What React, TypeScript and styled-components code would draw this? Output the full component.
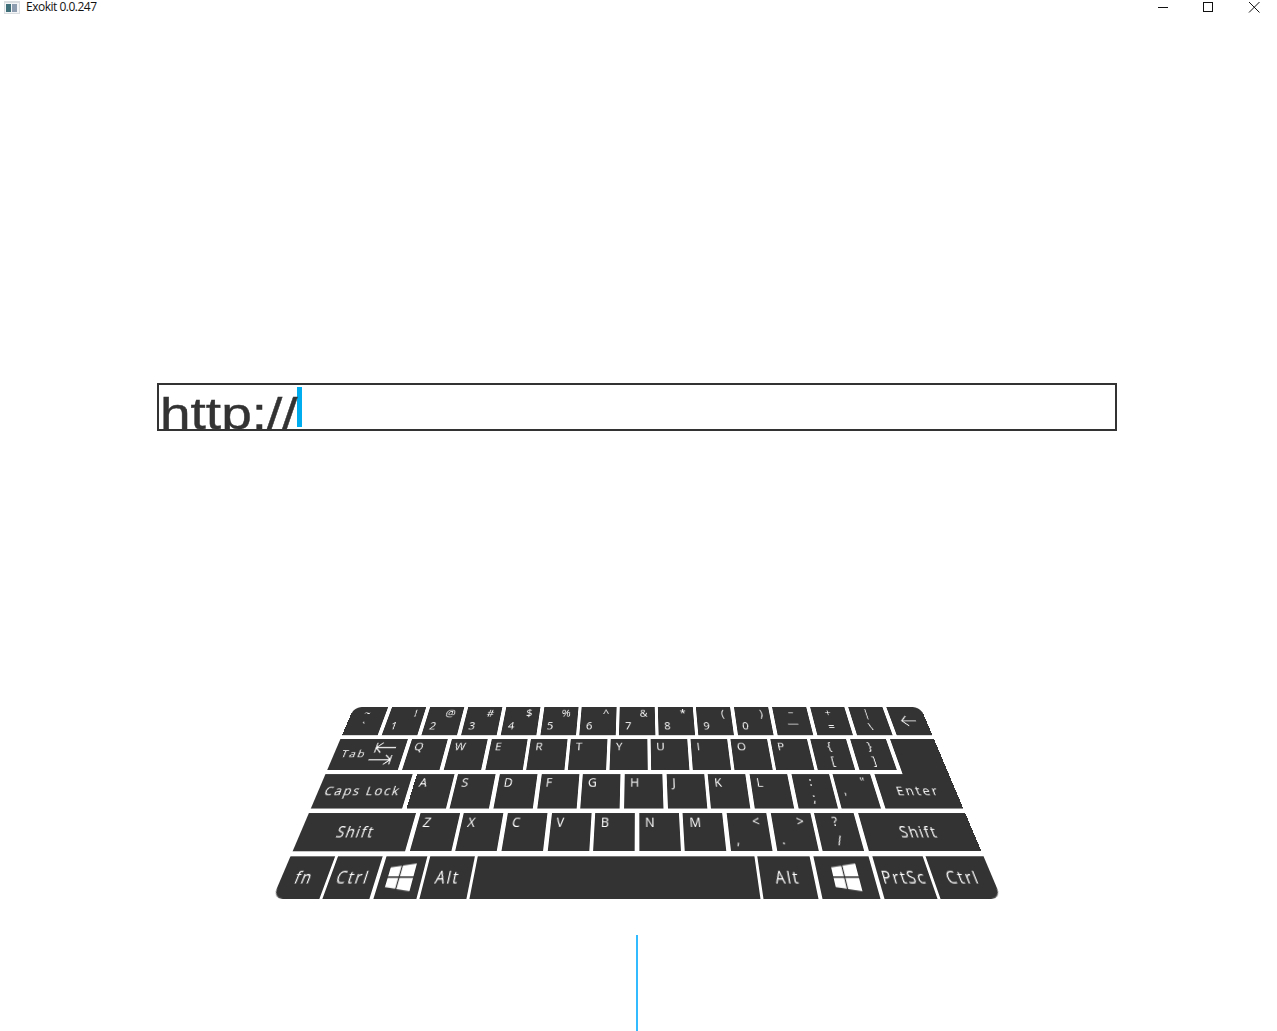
import React from "react";
import styled, { createGlobalStyle } from "styled-components";

const GlobalStyle = createGlobalStyle`
  html, body { margin: 0; padding: 0; background: #fff; overflow: hidden; }
`;

const Page = styled.div`
  width: 1277px;
  height: 1031px;
  display: flex;
  flex-direction: column;
  overflow: hidden;
`;

const TitleBar = styled.header`
  height: 15px;
  display: flex;
  align-items: flex-start;
  overflow: hidden;
  flex: none;
`;

const AppIcon = styled.svg`
  width: 16px;
  height: 13px;
  margin: 1px 6px 0 4px;
  flex: none;
`;

const Title = styled.span`
  font: 12px/14px "Open Sans", sans-serif;
  letter-spacing: -0.5px;
  color: #111;
  flex: 1;
`;

const WinButton = styled.svg`
  width: 46px;
  height: 15px;
  flex: none;
`;

const WinButtons = styled.div`
  display: flex;
  margin-right: -1px;
`;

const UrlBox = styled.div`
  box-sizing: border-box;
  width: 960px;
  height: 48px;
  margin: 368px 0 0 157px;
  border: 2px solid #333;
  display: flex;
  align-items: flex-start;
  overflow: hidden;
  flex: none;
`;

/* The reference's text is stretched sideways: 44px high, 55px wide */
const UrlText = styled.span`
  font: 44px/57px "Liberation Sans", Arial, sans-serif;
  color: #333;
  -webkit-text-stroke: 0.4px #333;
  margin-left: 1px;
  white-space: nowrap;
  transform-origin: 0 0;
  transform: scaleX(1.25);
`;

const Caret = styled.span`
  width: 5px;
  height: 40px;
  margin: 2px 0 0 27px;
  background: #00aeef;
  flex: none;
`;

/* The keyboard is laid out flat, then projected onto the reference's trapezoid */
const Keyboard = styled.div`
  width: 729px;
  height: 220px;
  margin: 276px 0 0 354px;
  display: grid;
  grid-template-rows: repeat(5, 1fr);
  row-gap: 5.5px;
  flex: none;
  transform-origin: 0 0;
  transform: matrix3d(0.777, 0, 0, 0, -0.2884, 0.678, 0, -0.001015, 0, 0, 1, 0, 0, 0, 0, 1);
  font-family: "Open Sans", sans-serif;
  color: #fff;
`;

const Row = styled.div<{ $gap?: number }>`
  display: flex;
  gap: ${(p) => p.$gap ?? 4.6}px;
  min-height: 0;
`;

type Layout = "letter" | "pair" | "stack" | "close" | "center";

const layouts: Record<Layout, string> = {
  letter: "align-items: flex-start; justify-content: flex-start; padding: 2px 0 0 6.5px;",
  pair: "flex-direction: column; justify-content: space-between; align-items: stretch; padding: 1px 9px 5px 7px;",
  stack: "flex-direction: column; justify-content: space-between; align-items: center; padding: 1px 3px 4px 0;",
  close: "flex-direction: column; justify-content: center; align-items: center; padding-bottom: 8px;",
  center: "align-items: center; justify-content: center;",
};

const Key = styled.div<{ $w?: number; $layout?: Layout; $radius?: string; $join?: boolean }>`
  box-sizing: border-box;
  position: relative;
  display: flex;
  background: #333;
  min-width: 0;
  font-size: 14px;
  line-height: 1.1;
  ${(p) => (p.$w ? `flex: 0 0 ${p.$w}px;` : "flex: 1 1 40px;")}
  ${(p) => layouts[p.$layout ?? "letter"]}
  ${(p) => (p.$radius ? `border-radius: ${p.$radius};` : "")}
  ${(p) =>
    p.$join
      ? `&::after { content: ""; position: absolute; left: 0; right: 0; top: 100%; height: 6px; background: #333; }`
      : ""}
`;

const Upper = styled.span`
  text-align: right;
`;

const Lower = styled.span`
  text-align: left;
`;

const Wide = styled.span<{ $size?: number; $track?: number }>`
  font-size: ${(p) => p.$size ?? 15.5}px;
  letter-spacing: ${(p) => p.$track ?? 1.6}px;
  white-space: nowrap;
`;

const TabArrows = styled.svg`
  width: 32px;
  height: 32px;
  margin-left: 3px;
  flex: none;
`;

const BackArrow = styled.svg`
  width: 20px;
  height: 16px;
`;

const WinLogo = styled.svg`
  width: 28px;
  height: 26px;
`;

const Pointer = styled.div`
  width: 2px;
  height: 96px;
  margin: 8px 0 0 636px;
  background: #33bbff;
  flex: none;
`;

const Windows = () => (
  <WinLogo viewBox="0 0 24 24" fill="#fff">
    <path d="M0 3.4 10 2v9.4H0zM11.2 1.8 24 0v11.4H11.2zM0 12.6h10V22L0 20.6zM11.2 12.6H24V24l-12.8-1.8z" />
  </WinLogo>
);

const pairs: [string, string][] = [
  ["!", "1"], ["@", "2"], ["#", "3"], ["$", "4"], ["%", "5"], ["^", "6"],
  ["&", "7"], ["*", "8"], ["(", "9"], [")", "0"],
];

const Letters = ({ chars }: { chars: string }) => (
  <>
    {chars.split("").map((c) => (
      <Key key={c}>{c}</Key>
    ))}
  </>
);

export default function App() {
  return (
    <Page>
      <GlobalStyle />
      <TitleBar>
        <AppIcon viewBox="0 0 16 13">
          <rect x="0" y="0" width="16" height="13" fill="#d9dde0" />
          <rect x="1" y="2" width="14" height="10" fill="#f4f5f6" />
          <rect x="2" y="3" width="5" height="8" fill="#3f6f78" />
          <rect x="8" y="3" width="5" height="8" fill="#8e9db0" />
        </AppIcon>
        <Title>Exokit 0.0.247</Title>
        <WinButtons>
          <WinButton viewBox="0 0 46 15">
            <path d="M18 7.5h10" stroke="#111" strokeWidth="1" />
          </WinButton>
          <WinButton viewBox="0 0 46 15">
            <rect x="17.5" y="2.5" width="9" height="9" fill="none" stroke="#111" strokeWidth="1" />
          </WinButton>
          <WinButton viewBox="0 0 46 15">
            <path d="M17 2 27.5 12.5M27.5 2 17 12.5" stroke="#111" strokeWidth="1" fill="none" />
          </WinButton>
        </WinButtons>
      </TitleBar>

      <UrlBox>
        <UrlText>http://</UrlText>
        <Caret />
      </UrlBox>

      <Keyboard>
        <Row>
          <Key $layout="stack" $radius="10px 0 0 0">
            <span>~</span>
            <span>`</span>
          </Key>
          {pairs.map(([u, l]) => (
            <Key $layout="pair" key={l}>
              <Upper>{u}</Upper>
              <Lower>{l}</Lower>
            </Key>
          ))}
          <Key $layout="close">
            <span>–</span>
            <span>—</span>
          </Key>
          <Key $layout="stack">
            <span>+</span>
            <span>=</span>
          </Key>
          <Key $layout="stack">
            <span>|</span>
            <span>\</span>
          </Key>
          <Key $layout="center" $radius="0 10px 0 0">
            <BackArrow viewBox="0 0 20 16" fill="none" stroke="#fff" strokeWidth="1.2">
              <path d="M1 8h18M8 1 1 8l7 7" />
            </BackArrow>
          </Key>
        </Row>
        <Row>
          <Key $w={83} $layout="center">
            <Wide $size={13.5} $track={2.2}>Tab</Wide>
            <TabArrows viewBox="0 0 32 32" fill="none" stroke="#fff" strokeWidth="1.3">
              <path d="M6 1v13M6 7.5h24M13 1 6 7.5l7 6.5M2 23h26M21 17l7 6-7 6M28 17v12" />
            </TabArrows>
          </Key>
          <Letters chars="QWERTYUIOP" />
          <Key $layout="stack">
            <span>{"{"}</span>
            <span>[</span>
          </Key>
          <Key $layout="stack">
            <span>{"}"}</span>
            <span>]</span>
          </Key>
          <Key $w={54} $join />
        </Row>
        <Row>
          <Key $w={102} $layout="center">
            <Wide $size={14.5} $track={2.1}>Caps Lock</Wide>
          </Key>
          <Letters chars="ASDFGHJKL" />
          <Key $layout="stack">
            <span>:</span>
            <span>;</span>
          </Key>
          <Key $layout="pair">
            <Upper>"</Upper>
            <Lower>'</Lower>
          </Key>
          <Key $w={87} $layout="center">
            <Wide $size={14.5} $track={2.6}>Enter</Wide>
          </Key>
        </Row>
        <Row>
          <Key $w={119} $layout="center">
            <Wide>Shift</Wide>
          </Key>
          <Letters chars="ZXCVBNM" />
          <Key $layout="pair">
            <Upper>&lt;</Upper>
            <Lower>,</Lower>
          </Key>
          <Key $layout="pair">
            <Upper>&gt;</Upper>
            <Lower>.</Lower>
          </Key>
          <Key $layout="stack">
            <span>?</span>
            <span>/</span>
          </Key>
          <Key $w={119} $layout="center">
            <Wide>Shift</Wide>
          </Key>
        </Row>
        <Row $gap={3.6}>
          <Key $w={46.5} $layout="center" $radius="0 0 0 10px">
            <Wide>fn</Wide>
          </Key>
          <Key $w={47} $layout="center">
            <Wide $track={2}>Ctrl</Wide>
          </Key>
          <Key $w={43} $layout="center">
            <Windows />
          </Key>
          <Key $w={46.5} $layout="center">
            <Wide $track={2}>Alt</Wide>
          </Key>
          <Key $w={290.5} />
          <Key $w={55} $layout="center">
            <Wide $track={2}>Alt</Wide>
          </Key>
          <Key $w={58} $layout="center">
            <Windows />
          </Key>
          <Key $w={53} $layout="center">
            <Wide $track={1.6}>PrtSc</Wide>
          </Key>
          <Key $w={60.5} $layout="center" $radius="0 0 10px 0">
            <Wide $track={2}>Ctrl</Wide>
          </Key>
        </Row>
      </Keyboard>

      <Pointer />
    </Page>
  );
}
